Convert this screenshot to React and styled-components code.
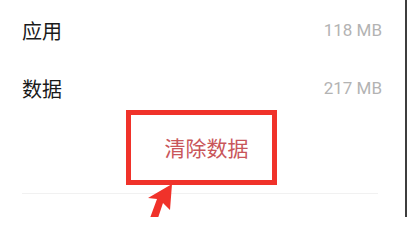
import React from "react";
import styled, { createGlobalStyle } from "styled-components";

const Global = createGlobalStyle`
  html, body { margin: 0; padding: 0; background: #ffffff; }
  body { font-family: Roboto, "Noto Sans CJK SC", sans-serif; }
`;

const Screen = styled.div`
  position: relative;
  width: 407px;
  height: 217px;
  overflow: hidden;
  display: flex;
  background: #ffffff;
`;

const Content = styled.div`
  flex: 1;
  display: flex;
  flex-direction: column;
  padding: 1px 23px 0 22px;
`;

const Edge = styled.div`
  width: 2px;
  background: #3d3d3d;
`;

const Row = styled.div`
  height: 58px;
  display: flex;
  align-items: center;
  justify-content: space-between;
`;

const Label = styled.span`
  font-family: "Noto Sans CJK SC", sans-serif;
  font-size: 20px;
  color: #1a1a1a;
`;

const Value = styled.span`
  font-family: Roboto, sans-serif;
  font-size: 17px;
  color: #b3b3b3;
`;

const ButtonArea = styled.div`
  height: 60px;
  margin-bottom: 16px;
  display: flex;
  align-items: center;
  justify-content: center;
  padding-left: 9px;
`;

const ClearButton = styled.span`
  font-family: "Noto Sans CJK SC", sans-serif;
  font-size: 21px;
  color: #c9565a;
`;

const Divider = styled.div`
  height: 1px;
  background: #f1f1f1;
  margin-right: 4px;
`;

const Highlight = styled.div`
  position: absolute;
  left: 126px;
  top: 110px;
  width: 151px;
  height: 75px;
  box-sizing: border-box;
  border: 5px solid #f0322a;
`;

const Arrow = styled.svg`
  position: absolute;
  left: 0;
  top: 0;
  pointer-events: none;
`;

export default function App() {
  return (
    <>
      <Global />
      <Screen>
        <Content>
          <Row>
            <Label>应用</Label>
            <Value>118 MB</Value>
          </Row>
          <Row>
            <Label>数据</Label>
            <Value>217 MB</Value>
          </Row>
          <ButtonArea>
            <ClearButton>清除数据</ClearButton>
          </ButtonArea>
          <Divider />
        </Content>
        <Edge />
        <Highlight />
        <Arrow width="407" height="217" viewBox="0 0 407 217">
          <polygon
            points="172,184 170,210 163,203 158,218 150,218 157,199 148,198"
            fill="#f0322a"
          />
        </Arrow>
      </Screen>
    </>
  );
}
